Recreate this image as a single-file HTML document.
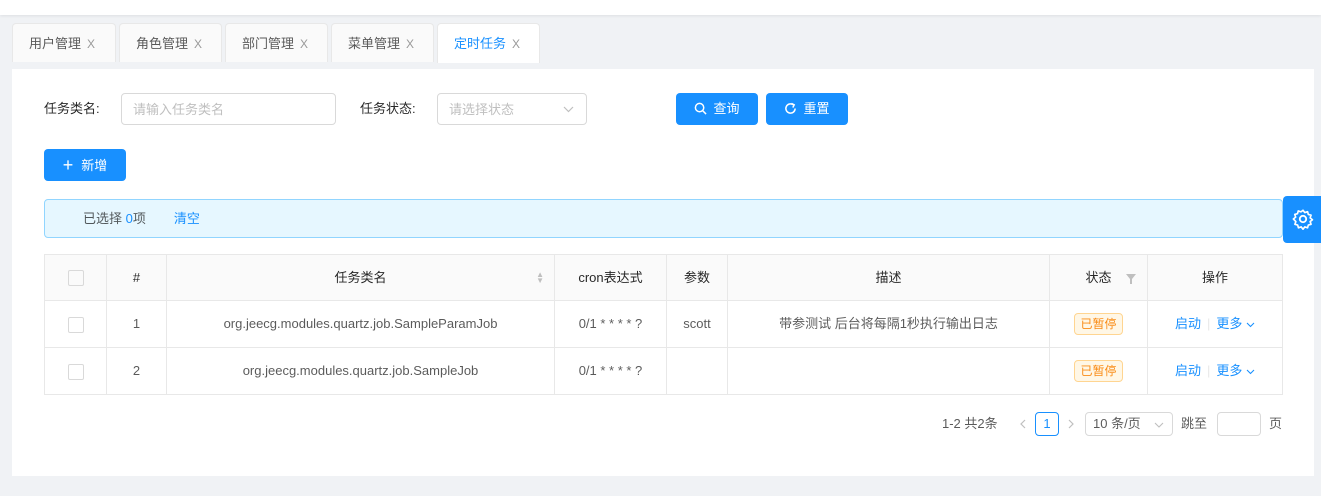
<!DOCTYPE html>
<html><head><meta charset="utf-8"><style>
*{box-sizing:border-box;margin:0;padding:0}
body{width:1321px;height:496px;background:#f0f2f5;font-family:"Liberation Sans","Noto Sans CJK SC",sans-serif;font-size:13px;color:rgba(0,0,0,.65);position:relative;overflow:hidden}
.abs{position:absolute}
.top{left:0;top:0;width:1321px;height:15px;background:#fff;box-shadow:0 1px 3px rgba(0,0,0,.08)}
.tab{top:23px;height:39px;border:1px solid #e8e8e8;border-bottom:none;background:#fafafa;border-radius:4px 4px 0 0;line-height:39px;padding-left:16px;font-size:13px;color:rgba(0,0,0,.65)}
.tab .x{color:#999;margin-left:6px;font-size:12px}
.card{left:12px;top:69px;width:1302px;height:407px;background:#fff}
.input{border:1px solid #d9d9d9;border-radius:4px;height:32px;line-height:32px;padding-left:11px;color:#bfbfbf}
.btn{background:#1890ff;color:#fff;border-radius:4px;height:32px;line-height:32px;text-align:center;font-size:13px}
table{border-collapse:collapse;position:absolute;left:44px;top:254px;width:1239px;table-layout:fixed}
td,th{border:1px solid #e8e8e8;text-align:center;font-weight:normal;font-size:13px;padding:0;line-height:20px}
th{background:#fafafa;height:46px;color:rgba(0,0,0,.85)}
td{height:47px}
.cb{display:inline-block;width:16px;height:16px;border:1px solid #d9d9d9;border-radius:2px;vertical-align:middle}
.tag{display:inline-block;border:1px solid #ffd591;background:#fff7e6;color:#fa8c16;border-radius:4px;padding:0 5px;line-height:20px;font-size:12px}
a{color:#1890ff}
.chev{display:inline-block;vertical-align:middle}
</style></head><body>
<div class="abs top"></div>
<div class="abs tab" style="left:12px;width:104px">用户管理<span class="x">X</span></div>
<div class="abs tab" style="left:119px;width:103px">角色管理<span class="x">X</span></div>
<div class="abs tab" style="left:225px;width:103px">部门管理<span class="x">X</span></div>
<div class="abs tab" style="left:331px;width:103px">菜单管理<span class="x">X</span></div>
<div class="abs tab" style="left:437px;width:103px;background:#fff;color:#1890ff;height:40px">定时任务<span class="x">X</span></div>
<div class="abs card"></div>
<div class="abs" style="left:44px;top:93px;line-height:32px;color:rgba(0,0,0,.85)">任务类名:</div>
<div class="abs input" style="left:121px;top:93px;width:215px">请输入任务类名</div>
<div class="abs" style="left:360px;top:93px;line-height:32px;color:rgba(0,0,0,.85)">任务状态:</div>
<div class="abs input" style="left:437px;top:93px;width:150px">请选择状态<svg class="chev" width="11" height="7" viewBox="0 0 11 7" style="position:absolute;right:12px;top:12px"><path d="M1 1l4.5 4.5L10 1" stroke="#bfbfbf" stroke-width="1.2" fill="none"/></svg></div>
<div class="abs btn" style="left:676px;top:93px;width:82px"><svg width="13" height="13" viewBox="0 0 14 14" style="vertical-align:-2px;margin-right:6px"><circle cx="6" cy="6" r="4.5" stroke="#fff" stroke-width="1.6" fill="none"/><path d="M9.3 9.3L13 13" stroke="#fff" stroke-width="1.6"/></svg>查询</div>
<div class="abs btn" style="left:766px;top:93px;width:82px"><svg width="13" height="13" viewBox="0 0 14 14" style="vertical-align:-2px;margin-right:6px"><path d="M12 7A5 5 0 1 1 10 3" stroke="#fff" stroke-width="1.6" fill="none"/><path d="M8 1.5L11 3L9.5 6" stroke="#fff" stroke-width="1.6" fill="none"/></svg>重置</div>
<div class="abs btn" style="left:44px;top:149px;width:82px"><span style="font-size:18px;vertical-align:-1px;margin-right:8px">+</span>新增</div>
<div class="abs" style="left:44px;top:199px;width:1239px;height:39px;background:#e6f7ff;border:1px solid #91d5ff;border-radius:4px;line-height:37px;padding-left:38px">已选择 <a>0</a>项<a style="margin-left:28px">清空</a></div>
<div class="abs" style="left:1283px;top:196px;width:38px;height:47px;background:#1890ff;border-radius:4px 0 0 4px"><svg width="22" height="22" viewBox="0 0 24 24" style="margin:12px 0 0 9px"><circle cx="12" cy="12" r="3.5" stroke="#fff" stroke-width="2" fill="none"/><path d="M12 2.5l2 2.5 3-1 .8 3 3 .8-1 3 2.5 2-2.5 2 1 3-3 .8-.8 3-3-1-2 2.5-2-2.5-3 1-.8-3-3-.8 1-3L1.5 12 4 10l-1-3 3-.8.8-3 3 1z" stroke="#fff" stroke-width="1.8" fill="none" stroke-linejoin="round"/></svg></div>
<table>
<colgroup><col style="width:62px"><col style="width:60px"><col style="width:388px"><col style="width:112px"><col style="width:61px"><col style="width:322px"><col style="width:98px"><col style="width:135px"></colgroup>
<tr><th><span class="cb"></span></th><th>#</th><th style="position:relative">任务类名<span style="position:absolute;right:10px;top:17px;color:#bfbfbf;font-size:8px;line-height:6px">▲<br>▼</span></th><th>cron表达式</th><th>参数</th><th>描述</th><th style="position:relative">状态<svg width="10" height="10" viewBox="0 0 10 10" style="position:absolute;right:11px;top:19px"><path d="M0 0h10L6 5v5H4V5z" fill="#bfbfbf"/></svg></th><th>操作</th></tr>
<tr><td><span class="cb"></span></td><td>1</td><td>org.jeecg.modules.quartz.job.SampleParamJob</td><td>0/1 * * * * ?</td><td>scott</td><td>带参测试 后台将每隔1秒执行输出日志</td><td><span class="tag">已暂停</span></td><td><a>启动</a><span style="color:#e8e8e8;margin:0 6px">|</span><a>更多</a> <svg class="chev" width="9" height="6" viewBox="0 0 9 6"><path d="M1 1l3.5 3.5L8 1" stroke="#1890ff" stroke-width="1.1" fill="none"/></svg></td></tr>
<tr><td><span class="cb"></span></td><td>2</td><td>org.jeecg.modules.quartz.job.SampleJob</td><td>0/1 * * * * ?</td><td></td><td></td><td><span class="tag">已暂停</span></td><td><a>启动</a><span style="color:#e8e8e8;margin:0 6px">|</span><a>更多</a> <svg class="chev" width="9" height="6" viewBox="0 0 9 6"><path d="M1 1l3.5 3.5L8 1" stroke="#1890ff" stroke-width="1.1" fill="none"/></svg></td></tr>
</table>
<div class="abs" style="left:942px;top:414px;line-height:20px">1-2 共2条</div>
<svg class="abs" style="left:1019px;top:419px" width="7" height="10" viewBox="0 0 7 10"><path d="M6 1L2 5l4 4" stroke="#bfbfbf" stroke-width="1.2" fill="none"/></svg>
<div class="abs" style="left:1035px;top:412px;width:24px;height:24px;border:1px solid #1890ff;border-radius:4px;color:#1890ff;text-align:center;line-height:22px">1</div>
<svg class="abs" style="left:1068px;top:419px" width="7" height="10" viewBox="0 0 7 10"><path d="M1 1l4 4-4 4" stroke="#bfbfbf" stroke-width="1.2" fill="none"/></svg>
<div class="abs" style="left:1085px;top:412px;width:88px;height:24px;border:1px solid #d9d9d9;border-radius:4px;line-height:22px;padding-left:7px">10 条/页<svg width="10" height="6" viewBox="0 0 10 6" style="position:absolute;right:8px;top:9px"><path d="M1 1l4 4 4-4" stroke="#bfbfbf" stroke-width="1.1" fill="none"/></svg></div>
<div class="abs" style="left:1181px;top:414px;line-height:20px">跳至</div>
<div class="abs" style="left:1217px;top:412px;width:44px;height:24px;border:1px solid #d9d9d9;border-radius:4px"></div>
<div class="abs" style="left:1269px;top:414px;line-height:20px">页</div>
</body></html>
